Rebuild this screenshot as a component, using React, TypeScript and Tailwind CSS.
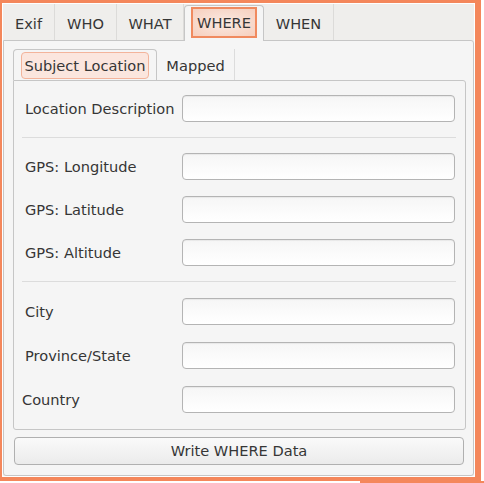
import React from "react";

const font = { fontFamily: '"DejaVu Sans", "Liberation Sans", sans-serif' };

function Field({ label, labelClass = "pl-[11px]" }: { label: string; labelClass?: string }) {
  return (
    <div className="flex items-center h-[27px]">
      <div className={`w-[168px] shrink-0 ${labelClass}`}>{label}</div>
      <div className="h-[27px] w-[273px] rounded-[4px] border border-[#b4b4b4] bg-gradient-to-b from-[#f6f6f6] to-white shadow-[inset_0_1px_1px_rgba(0,0,0,0.06)]" />
    </div>
  );
}

function Sep() {
  return <div className="h-px bg-[#dcdcdc] w-[434px] ml-[8px]" />;
}

export default function App() {
  const tabs = ["Exif", "WHO", "WHAT", "WHERE", "WHEN"];
  const widths = ["w-[52px]", "w-[62px]", "w-[67px]", "w-[80px]", "w-[70px]"];
  return (
    <div className="w-[484px] h-[483px] bg-white text-[14.6px] text-[#363636]" style={font}>
      <div className="w-[481px] h-[481px] bg-[#f4875b] pt-[3px] pl-[2px] pr-[6px] pb-[4px]">
        <div className="w-full h-full border border-white bg-[#efeeec] flex flex-col">
          {/* Tab bar */}
          <div className="h-[36px] flex shrink-0 relative">
            {tabs.map((t, i) =>
              t === "WHERE" ? (
                <div
                  key={t}
                  className={`${widths[i]} mt-[1px] h-[36px] rounded-t-[4px] border border-b-0 border-[#c6c6c6] bg-[#f5f5f5] flex items-start justify-center z-10 relative -mb-px`}
                >
                  <div className="w-[66px] h-[31px] mt-[1px] border-2 border-[#f08a5f] bg-[radial-gradient(ellipse_at_center,#fbeae2_0%,#f6cfbe_100%)] flex items-center justify-center pt-px">
                    WHERE
                  </div>
                </div>
              ) : (
                <div
                  key={t}
                  className={`${widths[i]} h-[36px] border-r border-[#dcdbd9] flex items-center justify-center pt-[3px]`}
                >
                  {t}
                </div>
              )
            )}
          </div>
          {/* Pane */}
          <div className="w-[471px] flex-1 border border-[#c6c6c6] rounded-b-[3px] rounded-tr-[3px] bg-[#f5f5f5] flex flex-col px-[9px] pt-[8px]">
            {/* Inner tab bar */}
            <div className="h-[31px] flex shrink-0">
              <div className="w-[144px] h-[31px] rounded-t-[4px] border border-b-0 border-[#c6c6c6] bg-[#f5f5f5] flex items-start justify-center relative z-10 -mb-px">
                <div className="w-[128px] h-[27px] mt-[2px] rounded-[4px] border border-[#f3b49b] bg-[#fbe6de] flex items-center justify-center">
                  Subject Location
                </div>
              </div>
              <div className="w-[78px] h-[31px] border-r border-[#dcdcdc] flex items-center justify-center pt-[3px]">
                Mapped
              </div>
            </div>
            <div className="w-[453px] h-[350px] border border-[#c6c6c6] rounded-b-[3px] rounded-tr-[3px] flex flex-col pt-[14px]">
              <Field label="Location Description" />
              <div className="mt-[15px]"><Sep /></div>
              <div className="mt-[15px]"><Field label="GPS: Longitude" /></div>
              <div className="mt-[16px]"><Field label="GPS: Latitude" /></div>
              <div className="mt-[16px]"><Field label="GPS: Altitude" /></div>
              <div className="mt-[15px]"><Sep /></div>
              <div className="mt-[16px]"><Field label="City" /></div>
              <div className="mt-[17px]"><Field label="Province/State" /></div>
              <div className="mt-[17px]"><Field label="Country" labelClass="pl-[8px]" /></div>
            </div>
            <div className="mt-[7px] w-[450px] h-[28px] ml-px rounded-[4px] border border-[#b0b0b0] bg-gradient-to-b from-[#fafafa] to-[#ebebeb] flex items-center justify-center">
              Write WHERE Data
            </div>
          </div>
        </div>
      </div>
      <div className="ml-[360px] w-[124px] h-[2px] bg-[#f4875b]" />
    </div>
  );
}
